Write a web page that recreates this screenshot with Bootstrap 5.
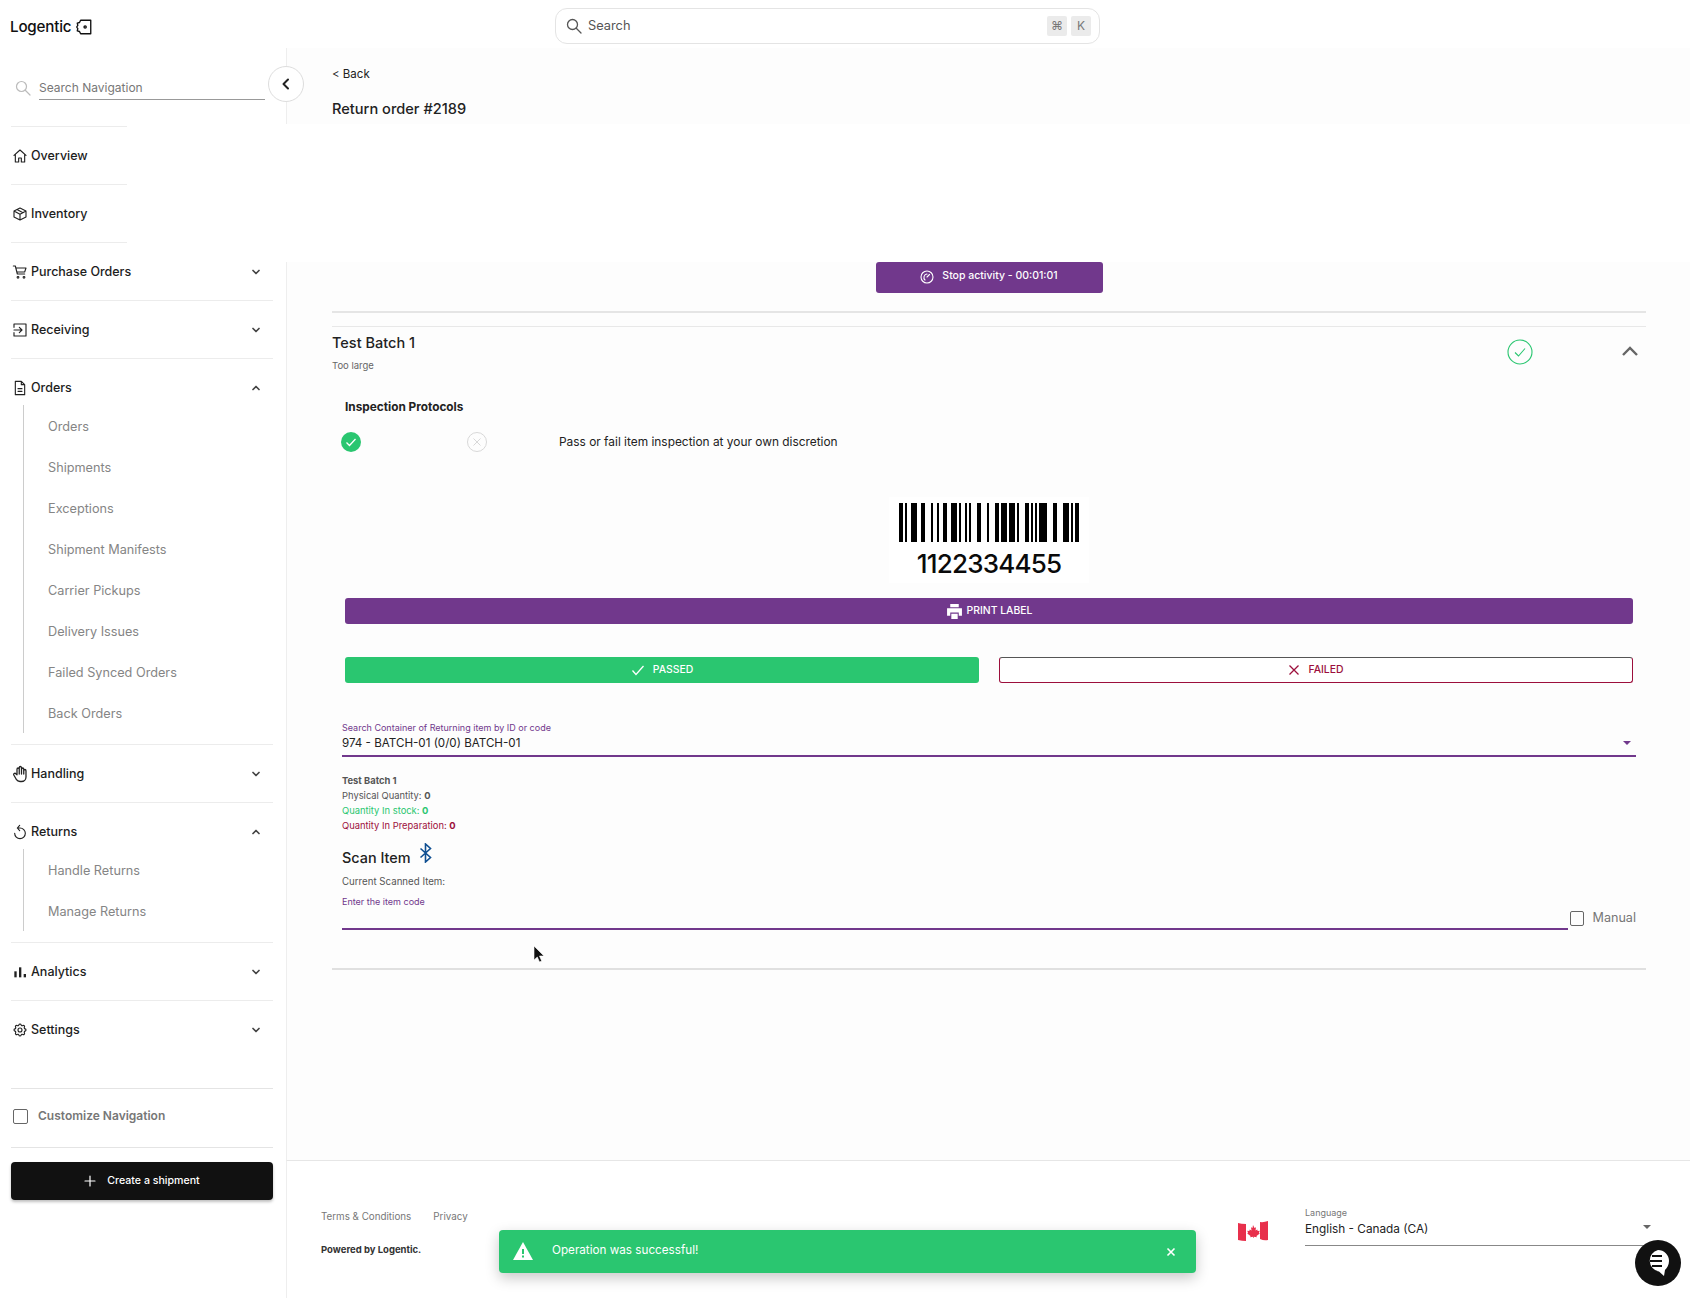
<!DOCTYPE html>
<html lang="en">
<head>
<meta charset="utf-8">
<title>Logentic</title>
<link href="https://cdn.jsdelivr.net/npm/bootstrap@5.3.0/dist/css/bootstrap.min.css" rel="stylesheet">
<style>
html,body{height:1298px;overflow:hidden}
body{background:#fff;color:#1b1b1b;font-family:Inter,"Liberation Sans",sans-serif;font-size:13px;position:relative}
svg{display:block;flex:none}
.ic{fill:none;stroke:currentColor;stroke-width:1.7;stroke-linecap:round;stroke-linejoin:round}
.topbar{height:48px}
.logo-box{width:286px;padding:6px 0 0 10px;font-size:15.2px;font-weight:500;letter-spacing:-.2px;color:#111}
.top-search{width:545px;height:36px;margin:8px 0 0 269px;border:1px solid #e4e4e4;border-radius:12px;padding:0 8px 0 10px;color:#555;font-size:12.8px;background:#fff}
.kbd-key{width:20px;height:20px;background:#ebebeb;color:#777;font-size:12px;border-radius:2px}
.shell{height:1250px}
.side{width:286px;flex:none;padding:0 13px 0 11px;background:#fff}
.side-search{height:78px;padding-top:16px}
.side-input{width:226px;height:36px;margin-left:8px;border-bottom:1px solid #999;color:#777;font-size:12px;padding-top:15px;line-height:18px}
.collapse-btn{position:absolute;left:268px;top:66px;width:36px;height:36px;border:1px solid #ddd;border-radius:50%;background:#fff;color:#222;z-index:2}
.rowline{height:58px;border-top:1px solid #ececec;font-size:12.5px;font-weight:500;color:#1d1d1d}
.rowline.tight{height:47px;padding-top:11px}
.rowline .lab{margin-left:3px;padding-top:1px}
.rowline .chev{margin-left:auto;margin-right:12px;color:#444}
.short-top{border-top:0;position:relative;padding-top:2px}
.short-top::before{content:"";position:absolute;left:0;top:0;width:116px;border-top:1px solid #ececec}
.side-ico{width:16px;height:16px;margin-left:1px;color:#222}
.side-ico.big{width:18px;height:18px;margin-left:0;margin-right:-1px}
.subnav{margin:0 0 11px 12px;border-left:1px solid #ccc}
.subnav a{display:flex;align-items:center;height:41px;padding:3px 0 0 24px;color:#858585;font-size:12.7px;text-decoration:none}
.custom-row{height:60px;margin-top:30px;border-top:1px solid #e4e4e4;border-bottom:1px solid #e4e4e4;font-weight:600;color:#777;font-size:12px;padding:0 0 4px 2px;gap:10px}
.box-check{width:15px;height:15px;border:1.5px solid #666;border-radius:2px}
.ship-btn{height:38px;margin-top:14px;background:#111;color:#fff;font-size:10.6px;font-weight:500;border-radius:4px;box-shadow:0 2px 3px rgba(0,0,0,.25);border:0;width:262px;gap:11px}
.ship-btn:hover{background:#111;color:#fff}
.content-col{background:#fdfdfd;min-width:0}
.head-band{height:76px;padding:0 0 0 45px;background:#fdfdfd;border-left:1px solid #eee}
.back-link{color:#222;font-size:11.5px;padding-top:18px;height:53px}
.page-title{font-size:14.6px;font-weight:500;margin:0;color:#222}
.blank-band{height:138px;background:#fff;flex:none}
.work{padding:0 44px 0 45px;border-left:1px solid #eee;flex-grow:1}
.stop-btn{width:227px;height:31px;background:#71388c;color:#fff;font-size:10.5px;font-weight:500;border:0;border-radius:3px;padding:0 0 3px}
.stop-btn:hover,.wide-btn:hover{background:#71388c;color:#fff}
.rule-thick{height:2px;background:#e5e5e5;margin-top:18px}
.rule-thin{height:1px;background:#e8e8e8;margin-top:13px}
.batch-name{font-size:14.5px;font-weight:500;color:#222;margin-top:5px;line-height:22px}
.batch-sub{font-size:9.5px;color:#666;margin-top:5px;line-height:14px}
.batch-head{height:60px}
.batch-body{padding:0 13px}
.insp-title{font-size:11.8px;font-weight:700;margin-top:11px;line-height:18px;color:#222}
.insp-row{height:20px;margin-top:16px;font-size:11.9px;color:#222}
.insp-text{margin-left:72px}
.code-wrap{background:#fff;width:200px;padding-top:6px;height:86px;margin-top:45px}
.code-digits{font-size:26px;font-weight:500;line-height:31px;color:#0a0a0a;letter-spacing:-.8px;margin-top:6px}
.wide-btn{height:26px;background:#71388c;color:#fff;font-size:10.4px;font-weight:500;border:0;border-radius:3px;padding:0 0 1px;margin-top:15px;width:100%}
.pass-btn,.fail-btn{height:26px;font-size:10.4px;font-weight:500;border-radius:3px;padding:0 0 1px;width:634px}
.pass-btn{background:#2ac670;color:#fff;border:0}
.pass-btn:hover{background:#2ac670;color:#fff}
.fail-btn{background:#fff;color:#9c0f3c;border:1px solid #9c0f3c;border-top-color:#555}
.fail-btn:hover{background:#fff;color:#9c0f3c}
.pass-row{margin-top:33px}
.pick{margin:39px -3px 0 -3px;border-bottom:2px solid #71388c;height:35px}
.mini-lab{font-size:9px;color:#71388c;line-height:12px}
.pick-val{font-size:11.6px;color:#222;line-height:17px;margin-top:1px}
.caret-down{width:0;height:0;border-left:4px solid transparent;border-right:4px solid transparent;border-top:4px solid #71388c;position:absolute;right:5px;top:19px}
.stock{margin:16px 0 0 -3px;font-size:9.4px;line-height:15px;color:#555}
.stock b{font-weight:700}
.in-stock{color:#2ac670}.in-prep{color:#9c0f3c}
.scan-title{font-size:14.4px;font-weight:500;color:#222;margin:14px 0 0 -3px;height:24px;gap:8px}
.cur-item{font-size:9.7px;color:#555;margin:4px 0 0 -3px;line-height:14px}
.scan-field{margin:0 -3px}
.scan-input{flex:1;height:41px;border-bottom:2px solid #71388c;padding-top:7px}
.manual{width:68px;font-size:12.6px;color:#777;padding:0 0 2px 2px;gap:9px}
.rule-bottom{height:2px;background:#e0e0e0;margin-top:38px}
.foot{flex:none;height:138px;border-top:1px solid #e6e6e6;border-left:1px solid #eee;background:#fff;padding:0 32px 0 34px}
.foot-links{font-size:9.8px;color:#777;gap:22px;margin-top:50px;line-height:12px}
.foot-power{font-size:9.5px;font-weight:700;color:#333;margin-top:20px}
.lang{width:353px;border-bottom:1px solid #888;height:39px;position:absolute;left:1305px;top:1207px}
.lang-lab{font-size:9px;color:#777;line-height:11px}
.lang-val{font-size:11.8px;color:#222;line-height:18px;margin-top:2px}
.lang-caret{position:absolute;right:7px;top:18px;width:0;height:0;border-left:4px solid transparent;border-right:4px solid transparent;border-top:4px solid #666}
.flag-pos{position:absolute;left:1238px;top:1221px}
.toast-ok{position:absolute;left:499px;top:1230px;width:697px;height:43px;background:#2ac670;color:#fff;border-radius:4px;font-size:11.7px;box-shadow:0 5px 14px rgba(0,0,0,.22);z-index:3;padding:0 20px 2px 14px}
.chat-fab{position:absolute;left:1635px;top:1240px;width:46px;height:46px;border-radius:50%;background:#111;z-index:4}
.cursor-pos{position:absolute;left:533px;top:945px;z-index:5}
</style>
</head>
<body>
<div class="topbar d-flex">
  <div class="logo-box d-flex align-items-center gap-1">Logentic
    <svg width="18" height="18" viewBox="0 0 16 16" class="ic" style="stroke-width:1.2"><path d="M5 2h9v12H5l-1-2-2-.5.5-2L1.500 8l1-1.500L2 4.500 4 4z"/><circle cx="9" cy="8" r="1"/></svg>
  </div>
  <div class="top-search d-flex align-items-center">
    <svg width="16" height="16" viewBox="0 0 16 16" class="ic" style="stroke-width:1.3;margin-right:6px"><circle cx="6.500" cy="6.500" r="5"/><path d="m10.500 10.500 4.500 4.500"/></svg>
    <span>Search</span>
    <span class="ms-auto d-flex gap-1"><span class="kbd-key d-flex align-items-center justify-content-center">⌘</span><span class="kbd-key d-flex align-items-center justify-content-center">K</span></span>
  </div>
</div>
<div class="collapse-btn d-flex align-items-center justify-content-center">
  <svg width="12" height="12" viewBox="0 0 12 12" class="ic" style="stroke-width:2"><path d="M8 1.500 3.500 6 8 10.500"/></svg>
</div>
<div class="shell d-flex">
  <aside class="side">
    <div class="side-search d-flex">
      <svg width="16" height="16" viewBox="0 0 16 16" class="ic mt-3 ms-1" style="stroke-width:1.2;color:#bbb"><circle cx="6.500" cy="6.500" r="5"/><path d="m10.500 10.500 4.500 4.500"/></svg>
      <div class="side-input">Search Navigation</div>
    </div>
    <div class="rowline short-top d-flex align-items-center">
      <svg class="side-ico ic" viewBox="0 0 24 24"><path d="M3 11 12 3l9 8M5 9.500V21h5v-6h4v6h5V9.500"/></svg><span class="lab">Overview</span>
    </div>
    <div class="rowline short-top d-flex align-items-center">
      <svg class="side-ico ic" viewBox="0 0 24 24"><path d="M21 7.500 12 3 3 7.500v9L12 21l9-4.500zM3 7.500l9 5 9-5M12 12.500V21M7.500 5.250l9 4.750"/></svg><span class="lab">Inventory</span>
    </div>
    <div class="rowline short-top d-flex align-items-center">
      <svg class="side-ico ic" viewBox="0 0 24 24"><path d="M2 3h3l3 12h11M5.700 6H21l-2 6H7.500"/><circle cx="9" cy="20" r="1.300"/><circle cx="18" cy="20" r="1.300"/></svg><span class="lab">Purchase Orders</span>
      <svg class="chev ic" width="10" height="10" viewBox="0 0 10 10"><path d="m2 3.500 3 3 3-3"/></svg>
    </div>
    <div class="rowline d-flex align-items-center">
      <svg class="side-ico ic" viewBox="0 0 24 24"><path d="M3 8V3h18v18H3v-5M3 12h12M11 8l4 4-4 4"/></svg><span class="lab">Receiving</span>
      <svg class="chev ic" width="10" height="10" viewBox="0 0 10 10"><path d="m2 3.500 3 3 3-3"/></svg>
    </div>
    <div class="rowline tight d-flex align-items-center">
      <svg class="side-ico ic" viewBox="0 0 24 24"><path d="M5 2h9l5 5v15H5zM14 2v5h5M9 13h6M9 17h6"/></svg><span class="lab">Orders</span>
      <svg class="chev ic" width="10" height="10" viewBox="0 0 10 10"><path d="m2 6.500 3-3 3 3"/></svg>
    </div>
    <nav class="subnav">
      <a href="#">Orders</a><a href="#">Shipments</a><a href="#">Exceptions</a><a href="#">Shipment Manifests</a><a href="#">Carrier Pickups</a><a href="#">Delivery Issues</a><a href="#">Failed Synced Orders</a><a href="#">Back Orders</a>
    </nav>
    <div class="rowline d-flex align-items-center">
      <svg class="side-ico big ic" viewBox="0 0 24 24"><path d="M8 13V5.500a1.500 1.500 0 0 1 3 0V12M11 5.500v-2a1.500 1.500 0 1 1 3 0V12M14 5.500a1.500 1.500 0 0 1 3 0V12M17 7.500a1.500 1.500 0 0 1 3 0V16a6 6 0 0 1-6 6h-2a6 6 0 0 1-5-2.700L7 19c-.3-.5-1.400-2.400-3.300-5.700a1.500 1.500 0 0 1 .5-2 1.900 1.900 0 0 1 2.300.3L8 13"/></svg><span class="lab">Handling</span>
      <svg class="chev ic" width="10" height="10" viewBox="0 0 10 10"><path d="m2 3.500 3 3 3-3"/></svg>
    </div>
    <div class="rowline tight d-flex align-items-center">
      <svg class="side-ico ic" viewBox="0 0 24 24"><path d="M8 6h4a8 8 0 1 1-8 8M11.500 2 8 6l3.500 4"/></svg><span class="lab">Returns</span>
      <svg class="chev ic" width="10" height="10" viewBox="0 0 10 10"><path d="m2 6.500 3-3 3 3"/></svg>
    </div>
    <nav class="subnav">
      <a href="#">Handle Returns</a><a href="#">Manage Returns</a>
    </nav>
    <div class="rowline d-flex align-items-center">
      <svg class="side-ico" viewBox="0 0 24 24" fill="currentColor"><rect x="3.500" y="11" width="3.500" height="9"/><rect x="10.500" y="5" width="3.500" height="15"/><rect x="17.500" y="15" width="3.500" height="5"/></svg><span class="lab">Analytics</span>
      <svg class="chev ic" width="10" height="10" viewBox="0 0 10 10"><path d="m2 3.500 3 3 3-3"/></svg>
    </div>
    <div class="rowline d-flex align-items-center">
      <svg class="side-ico ic" viewBox="0 0 24 24"><path d="M10.325 4.317c.426-1.756 2.924-1.756 3.350 0a1.724 1.724 0 0 0 2.573 1.066c1.543-.94 3.310.826 2.370 2.370a1.724 1.724 0 0 0 1.065 2.572c1.756.426 1.756 2.924 0 3.350a1.724 1.724 0 0 0-1.066 2.573c.94 1.543-.826 3.310-2.370 2.370a1.724 1.724 0 0 0-2.572 1.065c-.426 1.756-2.924 1.756-3.350 0a1.724 1.724 0 0 0-2.573-1.066c-1.543.94-3.310-.826-2.370-2.370a1.724 1.724 0 0 0-1.065-2.572c-1.756-.426-1.756-2.924 0-3.350a1.724 1.724 0 0 0 1.066-2.573c-.94-1.543.826-3.310 2.370-2.370 1 .608 2.296.07 2.572-1.065z"/><circle cx="12" cy="12" r="3"/></svg><span class="lab">Settings</span>
      <svg class="chev ic" width="10" height="10" viewBox="0 0 10 10"><path d="m2 3.500 3 3 3-3"/></svg>
    </div>
    <div class="custom-row d-flex align-items-center"><span class="box-check"></span><span>Customize Navigation</span></div>
    <button class="btn ship-btn d-flex align-items-center justify-content-center" type="button">
      <svg width="12" height="12" viewBox="0 0 12 12" class="ic" style="stroke-width:1.2"><path d="M6 1v10M1 6h10"/></svg>Create a shipment
    </button>
  </aside>
  <div class="content-col flex-grow-1 d-flex flex-column">
    <div class="head-band">
      <div class="back-link">&lt; Back</div>
      <h1 class="page-title">Return order #2189</h1>
    </div>
    <div class="blank-band"></div>
    <main class="work">
      <div class="d-flex justify-content-center">
        <button class="btn stop-btn d-flex align-items-center justify-content-center gap-2" type="button">
          <svg width="14" height="14" viewBox="0 0 14 14" class="ic" style="stroke-width:1.1;margin-top:2px"><circle cx="7" cy="7" r="6"/><path d="M7 7 9.500 4.500M5 10a3.500 3.500 0 0 1 2-6"/></svg>Stop activity - 00:01:01
        </button>
      </div>
      <div class="rule-thick"></div>
      <div class="rule-thin"></div>
      <div class="batch-head d-flex">
        <div>
          <div class="batch-name">Test Batch 1</div>
          <div class="batch-sub">Too large</div>
        </div>
        <svg class="ms-auto" style="margin-top:12px" width="26" height="26" viewBox="0 0 26 26" fill="none" stroke="#2ac670" stroke-width="1.100"><circle cx="13" cy="13" r="12"/><path d="m8 13.500 3.500 3.500L18 9.500"/></svg>
        <svg style="margin:18px 7px 0 88px" width="18" height="12" viewBox="0 0 18 12" fill="none" stroke="#666" stroke-width="2.400"><path d="m2 10 7-7 7 7"/></svg>
      </div>
      <div class="batch-body">
        <div class="insp-title">Inspection Protocols</div>
        <div class="insp-row d-flex align-items-center">
          <svg width="20" height="20" viewBox="0 0 20 20" style="margin-left:-4px"><circle cx="10" cy="10" r="10" fill="#2ac670"/><path d="m5.500 10.500 3 3 6-6.500" fill="none" stroke="#fff" stroke-width="1.300"/></svg>
          <svg width="20" height="20" viewBox="0 0 20 20" style="margin-left:106px" fill="none" stroke="#d8d8d8"><circle cx="10" cy="10" r="9.500"/><path d="m6.500 6.500 7 7m0-7-7 7"/></svg>
          <span class="insp-text">Pass or fail item inspection at your own discretion</span>
        </div>
        <div class="d-flex justify-content-center">
          <div class="code-wrap text-center">
            <svg class="mx-auto" width="180" height="39" viewBox="0 0 90 39" preserveAspectRatio="none" fill="#000"><rect x="0" width="2" height="39"/><rect x="3" width="1" height="39"/><rect x="6" width="3" height="39"/><rect x="11" width="2" height="39"/><rect x="16" width="1" height="39"/><rect x="19" width="1" height="39"/><rect x="22" width="2" height="39"/><rect x="26" width="3" height="39"/><rect x="30" width="1" height="39"/><rect x="33" width="1" height="39"/><rect x="35" width="1" height="39"/><rect x="39" width="2" height="39"/><rect x="44" width="1" height="39"/><rect x="48" width="2" height="39"/><rect x="51" width="3" height="39"/><rect x="55" width="3" height="39"/><rect x="59" width="1" height="39"/><rect x="63" width="2" height="39"/><rect x="66" width="1" height="39"/><rect x="68" width="1" height="39"/><rect x="70" width="4" height="39"/><rect x="77" width="2" height="39"/><rect x="82" width="3" height="39"/><rect x="86" width="1" height="39"/><rect x="88" width="2" height="39"/></svg>
            <div class="code-digits">1122334455</div>
          </div>
        </div>
        <button class="btn wide-btn d-flex align-items-center justify-content-center gap-1" type="button">
          <svg width="17" height="17" viewBox="0 0 16 16" fill="#fff" style="margin-top:1px"><path d="M4 1h8v3H4zM1 5h14v7h-3V9H4v3H1zM5 10h6v5H5z"/></svg>PRINT LABEL
        </button>
        <div class="pass-row d-flex justify-content-between">
          <button class="btn pass-btn d-flex align-items-center justify-content-center gap-2" type="button">
            <svg width="14" height="12" viewBox="0 0 14 12" fill="none" stroke="#fff" stroke-width="1.300" style="margin-top:1px"><path d="m1.500 6.500 3.500 4L12.500 2"/></svg>PASSED
          </button>
          <button class="btn fail-btn d-flex align-items-center justify-content-center gap-2" type="button">
            <svg width="12" height="12" viewBox="0 0 12 12" fill="none" stroke="#9c0f3c" stroke-width="1.300" style="margin-top:1px"><path d="m1.500 1.500 9 9m0-9-9 9"/></svg>FAILED
          </button>
        </div>
        <div class="pick position-relative">
          <div class="mini-lab">Search Container of Returning item by ID or code</div>
          <div class="pick-val">974 - BATCH-01 (0/0) BATCH-01</div>
          <span class="caret-down"></span>
        </div>
        <div class="stock">
          <div><b>Test Batch 1</b></div>
          <div>Physical Quantity: <b>0</b></div>
          <div class="in-stock">Quantity In stock: <b>0</b></div>
          <div class="in-prep">Quantity In Preparation: <b>0</b></div>
        </div>
        <div class="scan-title d-flex">Scan Item
          <svg width="14" height="20" viewBox="0 0 14 20" fill="none" stroke="#0f4f92" stroke-width="1.600" style="margin-top:-4px"><path d="m1.500 5.500 10 9L6.500 19V1l5 4.500-10 9"/></svg>
        </div>
        <div class="cur-item">Current Scanned Item:</div>
        <div class="scan-field d-flex align-items-end">
          <div class="scan-input"><div class="mini-lab">Enter the item code</div></div>
          <div class="manual d-flex align-items-center"><span class="box-check"></span><span>Manual</span></div>
        </div>
      </div>
      <div class="rule-bottom"></div>
    </main>
    <footer class="foot">
      <div class="foot-links d-flex"><span>Terms &amp; Conditions</span><span>Privacy</span></div>
      <div class="foot-power">Powered by Logentic.</div>
    </footer>
  </div>
</div>
<svg class="flag-pos" width="30" height="22" viewBox="0 0 30 22"><path d="M0 2q3 1 8 1v17q-4 0-8-1z" fill="#e8304c"/><path d="M8 3q3 0 7-1.500T22 1v17q-3-.5-7 .5t-7 1.500z" fill="#fff"/><path d="M22 1q4 .5 8-1v19q-4 1-8-1z" fill="#e8304c"/><path d="m15 4 1.500 3 1.500-.8-.5 3.300 1.800-1 .4 1.500 2-.3-.7 2.300.8.500-3.300 2.500.3 1.200-3-.4V17h-.6v-1.200l-3 .4.300-1.200-3.300-2.500.8-.5-.7-2.300 2 .3.400-1.500 1.800 1-.5-3.300 1.500.8z" fill="#e8304c"/></svg>
<div class="lang">
  <div class="lang-lab">Language</div>
  <div class="lang-val">English - Canada (CA)</div>
  <span class="lang-caret"></span>
</div>
<div class="toast-ok d-flex align-items-center">
  <svg width="20" height="18" viewBox="0 0 20 18"><path d="M10 0 20 18H0z" fill="#fff"/><rect x="9" y="7" width="2" height="5" fill="#2ac670"/><rect x="9" y="13.500" width="2" height="2" fill="#2ac670"/></svg>
  <span style="margin-left:19px">Operation was successful!</span>
  <svg class="ms-auto" width="10" height="10" viewBox="0 0 10 10" fill="none" stroke="#fff" stroke-width="1.600" style="margin-top:2px"><path d="m1.500 1.500 7 7m0-7-7 7"/></svg>
</div>
<div class="chat-fab d-flex align-items-center justify-content-center">
  <svg width="26" height="28" viewBox="0 0 26 28"><path d="M13 1a11 11 0 0 1 11 11c0 4-2 7-4 9l-1 6-5-4.500A11 11 0 0 1 13 1z" fill="#fff"/><path d="M7 7h10M5 12h12M7 17h10" stroke="#111" stroke-width="2.200"/></svg>
</div>
<svg class="cursor-pos" width="12" height="18" viewBox="0 0 12 18"><path d="M1 1v14l3.300-3 2.200 5 2.200-1-2.200-5H11z" fill="#111" stroke="#fff" stroke-width=".6"/></svg>
<script src="https://cdn.jsdelivr.net/npm/bootstrap@5.3.0/dist/js/bootstrap.bundle.min.js"></script>
</body>
</html>
